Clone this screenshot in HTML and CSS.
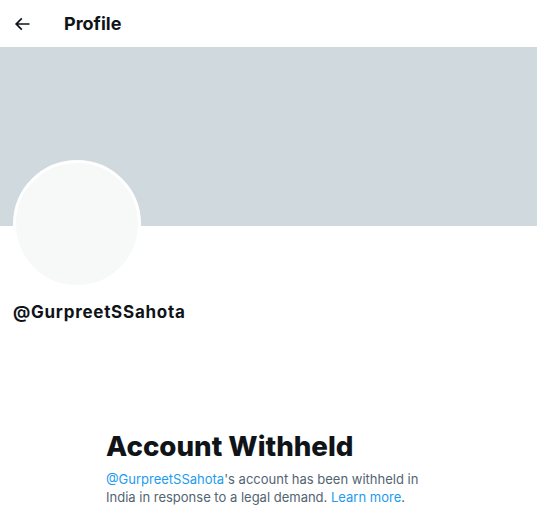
FILE: index.html
```html
<!DOCTYPE html>
<html lang="en">
<head>
<meta charset="utf-8">
<title>Profile</title>
<link rel="stylesheet" href="styles.css">
</head>
<body>
<header class="topbar">
  <div class="back">
    <svg viewBox="0 0 24 24" width="20" height="20"><path d="M7.414 13l5.043 5.04-1.414 1.42L3.586 12l7.457-7.46 1.414 1.42L7.414 11H21v2H7.414z"/></svg>
  </div>
  <h2 class="title">Profile</h2>
</header>
<div class="banner"></div>
<section class="profile">
  <div class="avatar"></div>
  <div class="handle">@GurpreetSSahota</div>
</section>
<section class="empty">
  <h1 class="empty-title">Account Withheld</h1>
  <p class="empty-text"><a class="link" href="#">@GurpreetSSahota</a>'s account has been withheld in India in response to a legal demand. <a class="link" href="#">Learn more</a>.</p>
</section>
</body>
</html>
```
FILE: styles.css
```css
html, body {
  margin: 0;
  padding: 0;
  background: #ffffff;
  font-family: Inter, "Noto Sans", sans-serif;
  color: #0f1419;
}
.topbar {
  height: 47px;
  display: flex;
  align-items: center;
  padding: 0 12px;
  box-sizing: border-box;
}
.back {
  width: 20px;
  height: 20px;
  display: flex;
}
.back svg { fill: #0f1419; }
.title {
  margin: 0 0 0 32px;
  font-size: 18px;
  font-weight: 700;
  line-height: 24px;
}
.banner {
  height: 179px;
  background: #cfd9de;
}
.profile {
  padding: 0 13px;
}
.avatar {
  width: 122px;
  height: 122px;
  margin-top: -66px;
  border-radius: 50%;
  border: 3px solid #ffffff;
  background: #f7f9f9;
}
.handle {
  margin-top: 14px;
  font-size: 17px;
  font-weight: 700;
  line-height: 20px;
  letter-spacing: 0.75px;
}
.empty {
  width: 336px;
  margin: 106px 0 0 106px;
}
.empty-title {
  margin: 0;
  font-size: 27.7px;
  font-weight: 800;
  line-height: 36px;
}
.empty-text {
  margin: 6px 0 0;
  font-size: 13px;
  line-height: 18px;
  color: #536471;
}
.link {
  color: #1d9bf0;
  text-decoration: none;
}
```
